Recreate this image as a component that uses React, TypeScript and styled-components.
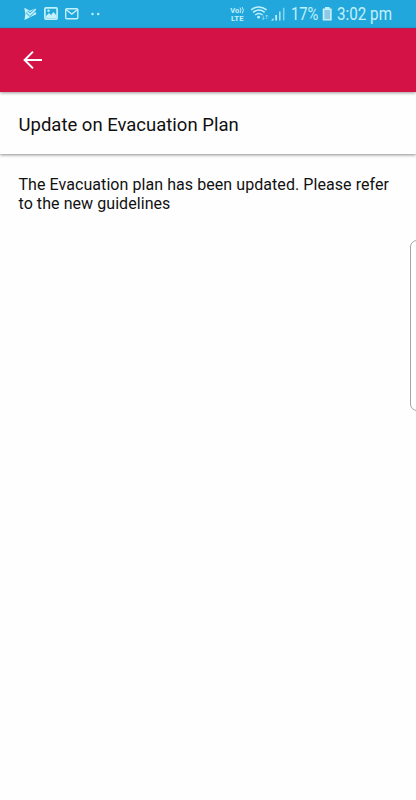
import React from "react";
import styled, { createGlobalStyle } from "styled-components";

const GlobalStyle = createGlobalStyle`
  * { box-sizing: border-box; }
  body { margin: 0; background: #fff; overflow: hidden; }
`;

const Screen = styled.div`
  position: relative;
  width: 416px;
  height: 800px;
  overflow: hidden;
  display: flex;
  flex-direction: column;
  background: #fefefe;
  font-family: Roboto, sans-serif;
  color: #111;
`;

const StatusBar = styled.header`
  flex: none;
  height: 28px;
  display: flex;
  justify-content: space-between;
  background: #22a7dc;
  color: #c3f1fb;
`;

const StatusIcons = styled.svg`
  display: block;
  flex: none;
  height: 28px;
`;

const StatusRight = styled.div`
  display: flex;
  align-items: flex-start;
  padding-right: 24px;
`;

const StatusText = styled.span<{ $width: number; $scale: number }>`
  display: block;
  width: ${(p) => p.$width}px;
  font-size: 18px;
  line-height: 28px;
  white-space: nowrap;
  transform: scaleX(${(p) => p.$scale});
  transform-origin: left center;
`;

const Toolbar = styled.nav`
  flex: none;
  height: 64px;
  display: flex;
  align-items: center;
  padding: 0 0 1px 22px;
  background: #d41245;
  border-top: 1px solid #b52055;
  box-shadow: 0 1px 3px rgba(0, 0, 0, 0.4);
  z-index: 2;
`;

const BackButton = styled.button`
  display: flex;
  padding: 0;
  border: 0;
  background: none;
  color: #fff;
`;

const TitleBar = styled.div`
  flex: none;
  height: 62px;
  padding: 21px 18px 0 18.5px;
  background: #fefefe;
  box-shadow: 0 1px 3px rgba(0, 0, 0, 0.45);
  z-index: 1;
`;

const Title = styled.h1`
  margin: 0;
  font-size: 18.5px;
  line-height: 24px;
  font-weight: 400;
  white-space: nowrap;
`;

const Message = styled.p`
  margin: 0;
  padding: 21px 0 0 18.5px;
  font-size: 16px;
  letter-spacing: 0.065px;
  line-height: 19px;
  white-space: nowrap;
`;

const EdgeHandle = styled.div`
  position: absolute;
  top: 240px;
  right: -8px;
  width: 14px;
  height: 171px;
  border: 1px solid #a5a5a5;
  border-radius: 8px;
  background: #fff;
`;

export default function App() {
  return (
    <Screen>
      <GlobalStyle />
      <StatusBar>
        <StatusIcons width="110" viewBox="0 0 110 28">
          <path d="M24.3 7.8l5.7 3 3.5-2 2.7 4.8v.6l-11.7 5.9.8-6z" fill="currentColor" />
          <path d="M27 11.8l3 2.9 5.7-5.5" fill="none" stroke="#22a7dc" strokeWidth="3.2" />
          <path d="M27 11.8l3 2.9 5.7-5.5" fill="none" stroke="currentColor" strokeWidth="1.7" />
          <rect x="44.9" y="7.9" width="12.2" height="11.2" rx="1" fill="none" stroke="currentColor" strokeWidth="1.7" />
          <path d="M46 18v-2l3-3 2 2 2.5-3 3 3.5V18z" fill="currentColor" />
          <circle cx="48.5" cy="10.8" r="1.2" fill="currentColor" />
          <rect x="65.7" y="8.7" width="12.1" height="10" rx="1" fill="none" stroke="currentColor" strokeWidth="1.4" />
          <path d="M66 9.5l5.8 4.6 5.8-4.6" fill="none" stroke="currentColor" strokeWidth="1.3" />
          <circle cx="92.5" cy="14" r="1.2" fill="currentColor" />
          <circle cx="98.2" cy="14" r="1.2" fill="currentColor" />
        </StatusIcons>
        <StatusRight>
          <StatusIcons width="61" viewBox="230 0 61 28">
            <g fill="currentColor" fontFamily="Roboto, sans-serif" fontWeight="700">
              <text x="230.3" y="12.8" fontSize="7" textLength="9" lengthAdjust="spacingAndGlyphs">Vo</text>
              <text x="231" y="21" fontSize="7" textLength="12.5" lengthAdjust="spacingAndGlyphs">LTE</text>
            </g>
            <g fill="none" stroke="currentColor">
              <path d="M240 7.6q2 2.7 0 5.4M242.2 7.1q2.4 3.2 0 6.4" strokeWidth="1" />
              <path d="M251.2 9.8q7.7-5.8 15.4 0M253.1 12.4q5.8-4.6 11.6 0M255.2 15q3.7-3 7.4 0" strokeWidth="1.5" />
              <path d="M263.3 19.5v-4m-1.3 2.7l1.3 1.3 1.3-1.3M266.7 19v-4m-1.3 1.4l1.3-1.4 1.3 1.4" strokeWidth=".8" opacity=".7" />
            </g>
            <g fill="currentColor">
              <circle cx="258.6" cy="17.2" r="1.4" />
              <path d="M271 20.5l2.5-2.5v2.5z" />
              <rect x="275.3" y="15" width="1.7" height="5.5" />
              <rect x="279" y="11.5" width="1.6" height="9" opacity=".8" />
              <rect x="282.9" y="7.8" width="1.6" height="12.7" opacity=".6" />
            </g>
          </StatusIcons>
          <StatusText $width={31} $scale={0.82}>17%</StatusText>
          <StatusIcons width="15" viewBox="322 0 15 28">
            <path d="M325 7h4.6v1.5h2.1v12.1h-9V8.5h2.3z" fill="currentColor" />
            <rect x="324.4" y="10" width="5.7" height="9" fill="#8fc8e4" />
          </StatusIcons>
          <StatusText $width={55} $scale={0.845}>3:02 pm</StatusText>
        </StatusRight>
      </StatusBar>
      <Toolbar>
        <BackButton aria-label="Back">
          <svg width="22" height="20" viewBox="0 0 22 20" fill="none" stroke="currentColor" strokeWidth="2">
            <path d="M20 10H3M11 1.6L2.6 10l8.4 8.4" />
          </svg>
        </BackButton>
      </Toolbar>
      <TitleBar>
        <Title>Update on Evacuation Plan</Title>
      </TitleBar>
      <Message>
        The Evacuation plan has been updated. Please refer
        <br />
        to the new guidelines
      </Message>
      <EdgeHandle />
    </Screen>
  );
}
